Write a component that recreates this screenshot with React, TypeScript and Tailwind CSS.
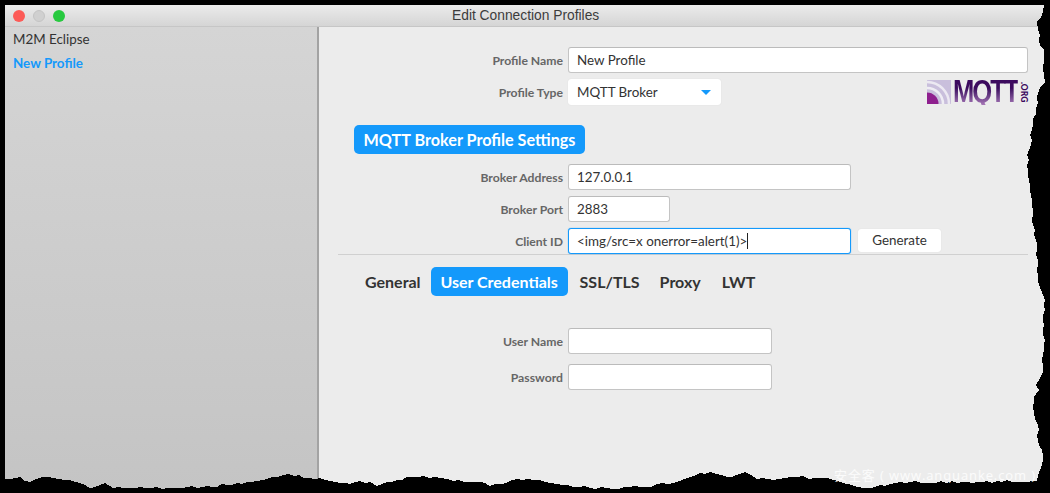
const anchors: [number, number][] = [
  [1044, 5], [1043, 12], [1037, 22], [1038, 30], [1040, 45], [1044, 50], [1044, 60], [1043, 68], [1045, 82], [1040, 88],
  [1036, 108], [1033, 125], [1029, 150], [1027, 165], [1030, 185], [1032, 200], [1033, 215], [1034, 235], [1037, 243],
  [1036, 255], [1038, 275], [1039, 285], [1043, 295], [1044, 305], [1043, 320], [1044, 345], [1043, 365], [1040, 378],
  [1036, 385], [1039, 390], [1034, 397], [1034, 412], [1038, 425], [1038, 440], [1043, 455], [1042, 465], [1038, 475],
  [1037, 481], [967, 482], [900, 482], [870, 488], [857, 487], [833, 480], [820, 478], [797, 477], [773, 480], [757, 479],
  [745, 472], [732, 477], [710, 472], [700, 473], [687, 478], [673, 483], [640, 487], [607, 488], [573, 487], [557, 484],
  [533, 480], [517, 479], [490, 486], [480, 482], [447, 479], [423, 476], [397, 480], [377, 486], [370, 482], [340, 483],
  [320, 478], [283, 475], [267, 479], [227, 485], [207, 486], [167, 488], [113, 488], [105, 483], [90, 488], [75, 482],
  [42, 477], [30, 482], [20, 477], [5, 479],
];

// roughen the outline a little so it reads as a torn edge
function tornEdge() {
  const pts: string[] = [];
  let seed = 7;
  anchors.forEach(([x, y], i) => {
    const next = anchors[i + 1];
    pts.push(`${x},${y}`);
    if (!next) return;
    const steps = Math.floor(Math.hypot(next[0] - x, next[1] - y) / 5);
    for (let s = 1; s < steps; s++) {
      seed = (seed * 73 + 41) % 101;
      const n = (seed % 3) - 1;
      const px = x + ((next[0] - x) * s) / steps;
      const py = y + ((next[1] - y) * s) / steps;
      pts.push(`${Math.round(px + (i < 37 ? n : 0))},${Math.round(py + (i < 37 ? 0 : n))}`);
    }
  });
  return `0,493 0,${anchors[anchors.length - 1][1]} ${pts.reverse().join(" ")} 1050,5 1050,493`;
}

function Field({ label, width, value, focused }: { label: string; width: string; value?: string; focused?: boolean }) {
  return (
    <div className="flex items-center gap-[5px]">
      <span className="w-[244px] pt-[3px] text-right text-[12.2px] font-bold text-[#666666]">{label}</span>
      <div
        className={`h-[26px] ${width} flex items-center rounded-[3px] bg-white px-[8px] text-[13.4px] text-[#333333] ${
          focused ? "border border-[#1499fb] shadow-[0_0_1px_#1499fb]" : "border border-[#c4c4c4] border-t-[#bbbbbb]"
        }`}
      >
        {value}
        {focused && <span className="h-[16px] w-px bg-[#222222]" />}
      </div>
    </div>
  );
}

function MqttLogo() {
  return (
    <div className="absolute left-[608px] top-[51px] flex h-[28px] items-center">
      <svg width="24" height="24" viewBox="0 0 24 24" className="mr-[2px]">
        <rect width="24" height="24" fill="#c9bfdc" />
        <path d="M0 2A22 22 0 0 1 22 24" fill="none" stroke="#ece9f2" strokeWidth="2.5" />
        <path d="M0 8A16 16 0 0 1 16 24" fill="none" stroke="#efedf4" strokeWidth="2.5" />
        <path d="M0 12.500A11.500 11.500 0 0 1 11.500 24H0Z" fill="#8e1f8e" />
      </svg>
      <div className="w-[66px]">
        <span className="inline-block origin-left scale-x-[0.8] bg-gradient-to-b from-[#3c0a5e] from-40% to-[#a878b8] bg-clip-text font-['Liberation_Sans',sans-serif] text-[32px] font-bold leading-[28px] tracking-[-2.5px] text-transparent">
          MQTT
        </span>
      </div>
      <span className="ml-px w-[8px] text-[8.5px] font-black leading-none text-[#3c0a5e] [writing-mode:vertical-rl]">
        .ORG
      </span>
    </div>
  );
}

export default function App() {
  return (
    <div className="relative h-[493px] w-[1050px] overflow-hidden bg-black font-['Lato',sans-serif]">
      <div className="ml-[5px] flex h-[493px] w-[1040px] flex-col pt-[5px]">
        {/* Title bar */}
        <div className="flex h-[22px] shrink-0 items-center border-b border-[#c6c6c6] bg-gradient-to-b from-[#ebebeb] to-[#d5d5d5]">
          <div className="flex items-center gap-[8px] pl-[8px]">
            <span className="h-[12px] w-[12px] rounded-full bg-[#fc5b57]" />
            <span className="h-[12px] w-[12px] rounded-full border border-[#c4c4c4] bg-[#d0d0d0]" />
            <span className="h-[12px] w-[12px] rounded-full bg-[#27c93f]" />
          </div>
          <span className="ml-[387px] pt-[2px] font-['Liberation_Sans',sans-serif] text-[13.8px] text-[#3c3c3c]">
            Edit Connection Profiles
          </span>
        </div>

        <div className="flex min-h-0 flex-1">
          {/* Profile list */}
          <div className="flex w-[314px] shrink-0 flex-col gap-[6px] border-r-2 border-[#a3a3a3] bg-gradient-to-b from-[#d5d5d5] to-[#c4c4c4] pl-[8px] pt-[3px] text-[13.4px]">
            <span className="leading-[18px] text-[#333333]">M2M Eclipse</span>
            <span className="font-bold leading-[18px] text-[#1499fb]">New Profile</span>
          </div>

          {/* Profile form */}
          <div className="relative flex-1 bg-[#ececec] pt-[20px]">
            <div className="flex flex-col gap-[6px]">
              <Field label="Profile Name" width="w-[460px]" value="New Profile" />
              <div className="flex items-center gap-[5px]">
                <span className="w-[244px] pt-[3px] text-right text-[12.2px] font-bold text-[#666666]">Profile Type</span>
                <div className="flex h-[26px] w-[153px] items-center justify-between rounded-[3px] bg-white pl-[9px] pr-[10px] text-[13.4px] text-[#333333] shadow-[0_0_1px_#cfcfcf]">
                  MQTT Broker
                  <span className="h-0 w-0 border-x-[5px] border-t-[5px] border-x-transparent border-t-[#1499fb]" />
                </div>
              </div>
            </div>
            <MqttLogo />

            <div className="ml-[35px] mt-[20px] flex h-[29px] w-[231px] items-center justify-center rounded-[5px] bg-[#1499fb] pt-px text-[16.2px] font-bold text-white">
              MQTT Broker Profile Settings
            </div>

            <div className="mt-[10px] flex flex-col gap-[6px]">
              <Field label="Broker Address" width="w-[283px]" value="127.0.0.1" />
              <Field label="Broker Port" width="w-[102px]" value="2883" />
              <div className="flex items-center gap-[7px]">
                <Field label="Client ID" width="w-[283px]" value="<img/src=x onerror=alert(1)>" focused />
                <div className="mb-[2px] flex h-[23px] w-[83px] items-center justify-center rounded-[3px] bg-white text-[13.4px] text-[#333333] shadow-[0_0_1px_#cfcfcf]">
                  Generate
                </div>
              </div>
            </div>

            <div className="ml-[19px] h-px w-[690px] bg-[#d0d0d0]" />

            {/* Tabs */}
            <div className="ml-[46px] mt-[12px] flex h-[29px] items-center gap-[10px] text-[16px] font-bold text-[#333333]">
              <span>General</span>
              <span className="flex h-[29px] w-[137px] items-center justify-center rounded-[5px] bg-[#1499fb] text-white">
                User Credentials
              </span>
              <span className="ml-[2px]">SSL/TLS</span>
              <span className="ml-[10px]">Proxy</span>
              <span className="ml-[11px]">LWT</span>
            </div>

            <div className="mt-[32px] flex flex-col gap-[10px]">
              <Field label="User Name" width="w-[204px]" />
              <Field label="Password" width="w-[204px]" />
            </div>
          </div>
        </div>
      </div>

      {/* Torn paper edge */}
      <svg className="absolute inset-0" width="1050" height="493" viewBox="0 0 1050 493" shapeRendering="crispEdges">
        <polygon points={tornEdge()} fill="#000000" />
      </svg>

      <span className="absolute left-[834px] top-[466px] font-['Open_Sans','Noto_Sans_CJK_SC',sans-serif] text-[13px] tracking-[0.9px] whitespace-nowrap text-white/80">
        安全客 ( www.anquanke.com )
      </span>
    </div>
  );
}
